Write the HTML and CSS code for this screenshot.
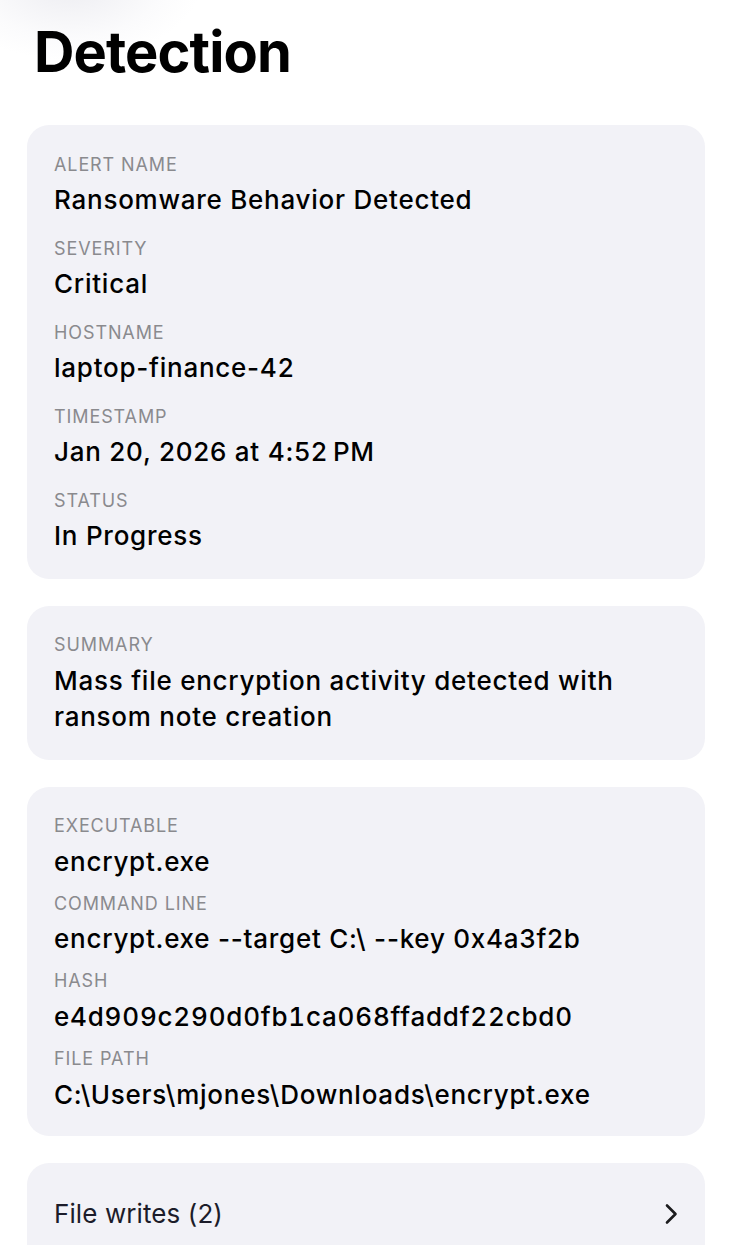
FILE: index.html
```html
<!DOCTYPE html>
<html lang="en">
<head>
<meta charset="utf-8">
<title>Detection</title>
<link rel="stylesheet" href="styles.css">
</head>
<body>
<div class="glow"></div>
<main class="page">
  <h1 class="title">Detection</h1>

  <section class="card card-main">
    <div class="field">
      <div class="label">ALERT NAME</div>
      <div class="value">Ransomware Behavior Detected</div>
    </div>
    <div class="field">
      <div class="label">SEVERITY</div>
      <div class="value">Critical</div>
    </div>
    <div class="field">
      <div class="label">HOSTNAME</div>
      <div class="value">laptop-finance-42</div>
    </div>
    <div class="field">
      <div class="label">TIMESTAMP</div>
      <div class="value">Jan 20, 2026 at 4:52&#8239;PM</div>
    </div>
    <div class="field">
      <div class="label">STATUS</div>
      <div class="value">In Progress</div>
    </div>
  </section>

  <section class="card card-summary">
    <div class="field">
      <div class="label">SUMMARY</div>
      <div class="value value-wrap">Mass file encryption activity detected with ransom note creation</div>
    </div>
  </section>

  <section class="card card-process">
    <div class="field">
      <div class="label">EXECUTABLE</div>
      <div class="value">encrypt.exe</div>
    </div>
    <div class="field">
      <div class="label">COMMAND LINE</div>
      <div class="value">encrypt.exe --target C:\ --key 0x4a3f2b</div>
    </div>
    <div class="field">
      <div class="label">HASH</div>
      <div class="value value-hash">e4d909c290d0fb1ca068ffaddf22cbd0</div>
    </div>
    <div class="field">
      <div class="label">FILE PATH</div>
      <div class="value">C:\Users\mjones\Downloads\encrypt.exe</div>
    </div>
  </section>

  <section class="card card-link">
    <div class="link-row">
      <span class="link-text">File writes (2)</span>
      <svg class="chevron" width="14" height="22" viewBox="0 0 14 22" aria-hidden="true">
        <path d="M3 2.5 L11.5 11 L3 19.5" fill="none" stroke="#1c1c1e" stroke-width="2.6" stroke-linecap="round" stroke-linejoin="round"/>
      </svg>
    </div>
  </section>
</main>
</body>
</html>
```

FILE: styles.css
```css
* {
  box-sizing: border-box;
}

html, body {
  margin: 0;
  padding: 0;
  background: #ffffff;
}

body {
  font-family: Inter, "Noto Sans", "Liberation Sans", sans-serif;
  color: #000000;
  width: 732px;
  min-height: 1245px;
  overflow: hidden;
  position: relative;
}

.glow {
  position: absolute;
  left: -60px;
  top: -90px;
  width: 260px;
  height: 150px;
  border-radius: 50%;
  background: radial-gradient(closest-side, rgba(235, 235, 240, 0.9), rgba(245, 245, 248, 0.4) 70%, rgba(255, 255, 255, 0));
  pointer-events: none;
}

.page {
  position: relative;
  padding: 17px 27px 0 27px;
  display: flex;
  flex-direction: column;
  gap: 27px;
}

.title {
  margin: 0 0 11px 7px;
  font-size: 56px;
  line-height: 70px;
  font-weight: 700;
  letter-spacing: -0.9px;
}

.card {
  background: #f2f2f7;
  border-radius: 22px;
  display: flex;
  flex-direction: column;
  padding: 29px 27px 27px 27px;
}

.field {
  display: flex;
  flex-direction: column;
}

.label {
  font-size: 18px;
  line-height: 22px;
  color: #8a8a8e;
  font-weight: 400;
  letter-spacing: 0.9px;
}

.value {
  font-size: 26px;
  line-height: 32px;
  font-weight: 500;
  color: #000000;
  letter-spacing: 0.75px;
}

.value-hash {
  font-feature-settings: "tnum" 1;
  letter-spacing: 0.8px;
}

.card-main {
  gap: 22px;
}

.card-main .field {
  gap: 8px;
}

.card-summary {
  padding: 28px 27px 25px 27px;
}

.card-summary .field {
  gap: 7px;
}

.value-wrap {
  line-height: 36px;
  padding-right: 40px;
}

.card-process {
  gap: 15px;
  padding: 28px 27px 25px 27px;
}

.card-process .field {
  gap: 8.7px;
}

.card-link {
  padding: 35px 27px 40px 27px;
}

.link-row {
  display: flex;
  align-items: center;
  justify-content: space-between;
}

.link-text {
  font-size: 26px;
  line-height: 32px;
  font-weight: 400;
  color: #1c1c2a;
  letter-spacing: 0.1px;
}

.chevron {
  flex: none;
}
```
